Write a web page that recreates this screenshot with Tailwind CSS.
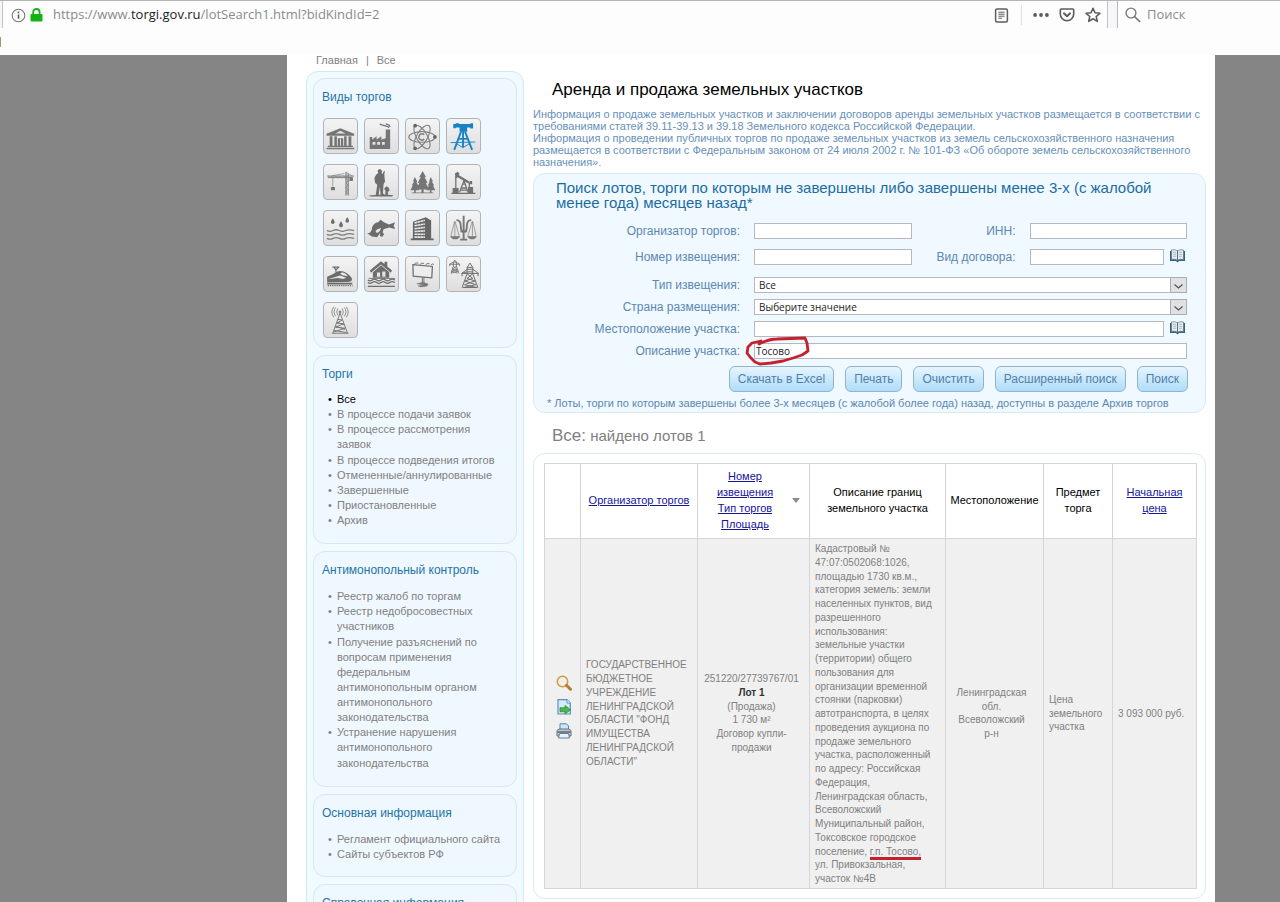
<!DOCTYPE html>
<html lang="ru">
<head>
<meta charset="utf-8">
<title>Аренда и продажа земельных участков</title>
<script src="https://cdn.jsdelivr.net/npm/@tailwindcss/browser@4"></script>
</head>
<body class="h-screen overflow-hidden bg-white font-['Liberation_Sans',Arial,sans-serif] text-[#808080] flex flex-col">

<!-- Browser toolbar -->
<header class="h-[55px] shrink-0 bg-[#fdfdfd] font-['Open_Sans','Noto_Sans',sans-serif] text-[13px]">
  <div class="flex h-7 items-stretch border-t border-[#b5b5b8] bg-[#f6f6f9] pl-[2px]">
    <div class="flex flex-1 items-center border-x border-[#c4c4c8] bg-[#fdfdfd] pl-2 pr-[6px] pt-px">
      <svg class="size-[15px]" viewBox="0 0 15 15" fill="none" stroke="#777" aria-hidden="true"><circle cx="7.5" cy="7.5" r="6.3" stroke-width="1.1"/><path d="M7.5 6.6v4.2M7.5 3.6v1.6" stroke="#555" stroke-width="1.5"/></svg>
      <svg class="ml-[4px] h-[14px] w-[13px]" viewBox="0 0 13 14" aria-hidden="true"><path d="M3.2 7V4.2a3.2 3.2 0 0 1 6.4 0V7" fill="none" stroke="#12b312" stroke-width="1.8"/><rect x=".5" y="6" width="12" height="7.6" rx="1" fill="#12b312"/></svg>
      <span class="ml-[10px] flex-1 text-[#8b8b8b]">https://www.<span class="text-[#1c1c1c]">torgi.gov.ru</span>/lotSearch1.html?bidKindId=2</span>
      <button aria-label="Режим чтения" class="size-[15px]"><svg viewBox="0 0 15 15" fill="none" stroke="#5e5e5e" aria-hidden="true"><rect x="1.6" y=".9" width="11.8" height="13.2" rx="1.5" stroke-width="1.5"/><path d="M4.4 4.2h6.2M4.4 6.2h6.2M4.4 8.2h6.2M4.4 10.2h3.6" stroke-width="1"/></svg></button>
      <span class="ml-3 mr-[11px] h-5 w-px bg-[#e0e0e3]"></span>
      <button aria-label="Действия" class="h-4 w-4"><svg viewBox="0 0 16 16" fill="#5c5c5c" aria-hidden="true"><circle cx="2.1" cy="8" r="1.9"/><circle cx="8" cy="8" r="1.9"/><circle cx="13.9" cy="8" r="1.9"/></svg></button>
      <button aria-label="Сохранить в Pocket" class="ml-[10px] size-4"><svg viewBox="0 0 16 16" fill="none" stroke="#5c5c5c" stroke-width="1.6" stroke-linecap="round" stroke-linejoin="round" aria-hidden="true"><path d="M2.3 2h11.4c.6 0 1 .4 1 1v4a6.7 6.7 0 0 1-13.4 0V3c0-.6.4-1 1-1z"/><path d="M4.9 6.3 8 9.2l3.1-2.9" stroke-width="1.9"/></svg></button>
      <button aria-label="Добавить в закладки" class="ml-[10px] size-4"><svg viewBox="0 0 16 16" fill="none" stroke="#5c5c5c" stroke-width="1.6" stroke-linejoin="round" aria-hidden="true"><path d="m8 1.3 2 4.5 4.9.5-3.7 3.2 1.1 4.9L8 11.8l-4.3 2.6 1.1-4.9L1.1 6.3 6 5.800z"/></svg></button>
    </div>
    <label class="ml-[9px] flex w-[163px] items-center border-l border-[#b9b9bd] bg-[#fdfdfd] pl-[7px] pt-px">
      <svg class="size-4 shrink-0" viewBox="0 0 16 16" fill="none" stroke="#7a7a7a" aria-hidden="true"><circle cx="6" cy="6" r="4.900" stroke-width="1.4"/><path d="m9.600 9.600 5.600 5.400" stroke-width="1.7"/></svg>
      <input type="search" placeholder="Поиск" aria-label="Поиск" class="ml-[6px] w-full min-w-0 bg-transparent outline-none placeholder:text-[#8c8c8c]">
    </label>
  </div>
  <div class="mt-[9px] h-[10px] w-px bg-[#9aa06a]"></div>
</header>

<div class="grid min-h-0 flex-1 grid-cols-[287px_minmax(0,1fr)_65px] bg-[#858585]">
<div></div>
<div class="overflow-hidden bg-white pl-[19px] pr-[9px]">
<div class="flex gap-[9px]">

  <!-- Sidebar -->
  <aside class="w-[218px] shrink-0">
    <nav class="h-4 pl-[10px] text-[11px] leading-[11px]" aria-label="Путь"><a href="#">Главная</a><span class="mx-2">|</span><a href="#">Все</a></nav>
    <div class="flex flex-col gap-[7px] rounded-xl border border-[#cfe9f5] bg-[#f0faff] px-[6px] py-[6px]">

      <section class="rounded-xl border border-[#d6e6f4] bg-[#f0f8ff] px-2 pb-[9px] pt-[10px]">
        <h2 class="text-[12px] leading-4 text-[#1e74a8]">Виды торгов</h2>
        <div class="mt-[13px] grid grid-cols-[repeat(4,35px)] gap-x-[6px] gap-y-[10px] pl-px [&>button]:h-9">
          <button aria-label="Государственное имущество" class="rounded-[4px] border border-[#b3b3b3] bg-linear-to-b from-[#f4f4f4] to-[#dedede]"><svg viewBox="0 0 105 105" fill="#757575" aria-hidden="true"><path d="M8 44 52 26l44 18v6H8zM18 52h9v30h-9zM33 52h8v30h-8zM64 52h8v30h-8zM78 52h9v30h-9zM44 58h17v24H44zM12 82h80v4H12zM8 88h88v5H8z"/><path d="m36 43 16-9 17 9zM51 60h3v22h-3z" fill="#e4e4e4"/></svg></button>
          <button aria-label="Предприятия" class="rounded-[4px] border border-[#b3b3b3] bg-linear-to-b from-[#f4f4f4] to-[#dedede]"><svg viewBox="0 0 105 105" fill="#757575" aria-hidden="true"><path d="M15 92V54h8v8l14-10v10l15-10v10l14-4V30h14v62z"/><path d="M24 70h9v9h-9zM39 70h9v9h-9zM54 70h9v9h-9z" fill="#e4e4e4"/><path d="M76 25c-2-8-9-4-14-7s-9 0-15-5M80 22c-2-9-9-7-14-10" fill="none" stroke="#757575" stroke-width="4"/></svg></button>
          <button aria-label="Атомная отрасль" class="rounded-[4px] border border-[#b3b3b3] bg-linear-to-b from-[#f4f4f4] to-[#dedede]"><svg viewBox="0 0 105 105" fill="none" stroke="#808080" stroke-width="3.500" aria-hidden="true"><ellipse cx="51" cy="54" rx="42" ry="17"/><ellipse cx="51" cy="54" rx="42" ry="17" transform="rotate(60 51 54)"/><ellipse cx="51" cy="54" rx="42" ry="17" transform="rotate(120 51 54)"/><circle cx="51" cy="54" r="14" fill="#e8e8e8" stroke="none"/><path d="M58 47a10 10 0 1 0 0 14" stroke-width="5"/><g fill="#666" stroke="none"><circle cx="29" cy="18" r="6"/><circle cx="92" cy="54" r="6"/><circle cx="29" cy="90" r="6"/></g></svg></button>
          <button aria-label="Земельные участки" class="rounded-[4px] border border-[#b3b3b3] bg-linear-to-b from-[#f4f4f4] to-[#dedede]"><svg viewBox="0 0 105 105" fill="#1783c6" aria-hidden="true"><path d="M20 13h8v-3h10v3h36v-3h9v17h-9v-3H28v2h-8zM40 24h24v13H40z"/><path d="M45 36 23 95M57 36l23 59M51 36v50M37 60h29" fill="none" stroke="#1783c6" stroke-width="6"/><path d="M12 72l78-2M31 76l20 12 22-14" fill="none" stroke="#1783c6" stroke-width="3"/></svg></button>

          <button aria-label="Строительство" class="rounded-[4px] border border-[#b3b3b3] bg-linear-to-b from-[#f4f4f4] to-[#dedede]"><svg viewBox="0 0 105 105" fill="none" stroke="#777" aria-hidden="true"><path d="M10 32h86M12 37h78" stroke-width="3"/><path d="m14 32 6 5 6-5 6 5 6-5 6 5 6-5 6 5 6-5 6 5 6-5" stroke-width="2"/><path d="M65 24 25 31M70 20l20 12" stroke-width="2"/><path d="M70 18v76M77 24v70" stroke-width="3.500"/><path d="m70 40 7 7-7 7 7 7-7 7 7 7-7 7 7 7" stroke-width="2.500"/><path d="M28 37v28" stroke-width="2"/><path d="M22 67h13v10H22zM81 36h11v12H81z" fill="#777" stroke="none"/></svg></button>
          <button aria-label="Охота" class="rounded-[4px] border border-[#b3b3b3] bg-linear-to-b from-[#f4f4f4] to-[#dedede]"><svg viewBox="0 0 105 105" fill="#6e6e6e" aria-hidden="true"><path d="M40 14c4-6 13-5 14 2l-1 7 8 6 3 20-5 8-2 30 6 7H50l-3-28-4 28h-9l5-34-7-7-2-16 6-10 6-5zM12 94l20-2 30-1 28 2-4 4H18z"/><path d="m57 23 5-7-8 58M66 92V78l-4-5 5-7 8 3 2 9-5 5v9z" stroke="#6e6e6e" stroke-width="2"/></svg></button>
          <button aria-label="Леса" class="rounded-[4px] border border-[#b3b3b3] bg-linear-to-b from-[#f4f4f4] to-[#dedede]"><svg viewBox="0 0 105 105" fill="#757575" aria-hidden="true"><path d="m53 16 11 20-5-1 10 19-6-1 10 22H56v11h-7V75H33l10-22-6 1 10-19-5 1zM28 35l8 15-3 1 8 15-4 2 5 9H31v8h-5v-8H14l8-16-4 1 8-13h-4zM79 35l7 14h-4l8 13-4-1 7 16H81v8h-5v-8H65l8-16-4 1 7-13h-3zM18 84h69v3H18z"/></svg></button>
          <button aria-label="Недропользование" class="rounded-[4px] border border-[#b3b3b3] bg-linear-to-b from-[#f4f4f4] to-[#dedede]"><svg viewBox="0 0 105 105" fill="#707070" aria-hidden="true"><path d="m25 24 9-6 6 6-3 5 34 20-3 7-34-20-6 4z"/><path d="M28 33v38M54 46 40 84M54 46l13 38M45 70h17M43 77h21M71 52v20M50 58h8" fill="none" stroke="#707070" stroke-width="4"/><path d="M18 70h19v15H18zM67 67h16v18H67zM14 85h76v4H14zM72 48h8v10h-8z"/></svg></button>

          <button aria-label="Водные объекты" class="rounded-[4px] border border-[#b3b3b3] bg-linear-to-b from-[#f4f4f4] to-[#dedede]"><svg viewBox="0 0 105 105" fill="#707070" aria-hidden="true"><path d="M28 20q12 17 0 18-12-1 0-18zM74 16q12 17 0 18-12-1 0-18zM54 29q13 19 0 20-12-1 0-20z"/><path d="M9 59q10 5 20 0t20 0 20 0 27 0M9 71q10 5 20 0t20 0 20 0 27 0M9 84q10 5 20 0t20 0 20 0 27 0" fill="none" stroke="#808080" stroke-width="4"/></svg></button>
          <button aria-label="Рыболовство" class="rounded-[4px] border border-[#b3b3b3] bg-linear-to-b from-[#f4f4f4] to-[#dedede]"><svg viewBox="0 0 105 105" fill="#6b6b6b" aria-hidden="true"><path d="M22 56c0-12 8-21 20-23l8-8 10 8 16 7 20-7-5 11 5 10-19-5-18 6-3 10 5 6-6 8-8-3 2-10-11 14-16-2-8-6-7-4 9-2z"/><path d="M34 60q8-10 17-8-2 8-9 13-9 4-8-5z" fill="#e7e7e7"/></svg></button>
          <button aria-label="Здания" class="rounded-[4px] border border-[#b3b3b3] bg-linear-to-b from-[#f4f4f4] to-[#dedede]"><svg viewBox="0 0 105 105" fill="#666" aria-hidden="true"><path d="M22 31 63 17l17 10v57h8v6H15v-6h7z"/><path d="m27 35 33-9M27 44l33-6M27 53l33-4M27 62l33-2M27 71h33M27 80h33" stroke="#ececec" stroke-width="5"/><path d="M36 29v55M46 27v57M55 24v60" stroke="#777" stroke-width="1.500"/></svg></button>
          <button aria-label="Конфискат" class="rounded-[4px] border border-[#b3b3b3] bg-linear-to-b from-[#f4f4f4] to-[#dedede]"><svg viewBox="0 0 105 105" fill="none" stroke="#777" aria-hidden="true"><path d="M53 12v76M30 26q14 0 14 20 0 17 9 18 10-1 10-18 0-20 14-20" stroke-width="6"/><path d="M42 88h22M43 62h21" stroke-width="5"/><path d="M24 30 12 78h27L26 30M80 30 66 78h27L82 30M25 30v46M81 30v46" stroke-width="2"/><path d="M11 78h30q-3 9-15 9t-15-9zM65 78h29q-3 9-14 9t-15-9z" fill="#777" stroke="none"/></svg></button>

          <button aria-label="Железные дороги" class="rounded-[4px] border border-[#b3b3b3] bg-linear-to-b from-[#f4f4f4] to-[#dedede]"><svg viewBox="0 0 105 105" fill="#6b6b6b" aria-hidden="true"><path d="M10 60q20-7 30-16 15-7 32 4 18 13 17 21-2 8-18 7l-61 1zM10 79h80v5H10z"/><path d="M27 29h22M32 30l6 8 8-8M38 38v7" fill="none" stroke="#6b6b6b" stroke-width="3.500"/><path d="M56 46q14 1 20 12l-18-3-6-6zM11 68l40-12 20 7-10 4-17-3z" fill="#e5e5e5"/><path d="M12 88h79" stroke="#6b6b6b" stroke-width="4" stroke-dasharray="4 3"/></svg></button>
          <button aria-label="Жилая недвижимость" class="rounded-[4px] border border-[#b3b3b3] bg-linear-to-b from-[#f4f4f4] to-[#dedede]"><svg viewBox="0 0 105 105" fill="#6e6e6e" aria-hidden="true"><path d="m15 40 36-30 11 9v-7h9v15l15 13-4 7-31-26-32 26zM25 45l26-22 26 22v18H25z"/><path d="M38 46h10v14H38zM55 43h10v17H55z" fill="#e5e5e5"/><path d="M9 70q7 5 14 0t14 0 14 0 14 0 14 0 16 0M9 78q7 5 14 0t14 0 14 0 14 0 14 0 16 0M9 90h86" fill="none" stroke="#6e6e6e" stroke-width="4"/><path d="M12 65h84" stroke="#777" stroke-width="3"/></svg></button>
          <button aria-label="Реклама" class="rounded-[4px] border border-[#b3b3b3] bg-linear-to-b from-[#f4f4f4] to-[#dedede]"><svg viewBox="0 0 105 105" fill="none" stroke="#6e6e6e" aria-hidden="true"><path d="m22 21 62 6-2 36-59-5z" stroke-width="4" fill="#ededed"/><path d="M26 20q4-6 13-4M44 21q4-6 13-4M62 22q4-6 13-4M79 23q4-6 10-3" stroke-width="3"/><path d="M52 62v22M57 62v22" stroke-width="3"/><path d="m34 82 20-5 17 6-5 7-19 2-9-3 20-4-13-1z" fill="#777" stroke-width="1"/></svg></button>
          <button aria-label="Электросети" class="rounded-[4px] border border-[#b3b3b3] bg-linear-to-b from-[#f4f4f4] to-[#dedede]"><svg viewBox="0 0 105 105" fill="none" stroke="#696969" aria-hidden="true"><path d="M73 16 64 30v20L48 94M73 16l9 14v20l16 44M64 30h18M47 49l17-13h19l17 13H47l17-5h18M64 50l18 15-25 8 34 12-38 9M82 50 64 65l25 8-33 12 38 9M50 94h47M48 49v9M99 49v9" stroke-width="3"/><path d="m25 7-5 8v11L13 49M25 7l5 8v11l8 23M8 20l12-7h10l10 7H8M20 26l12 10-17 6 19 6M30 26 18 36l17 6-21 6M9 20v6M40 20v6" stroke-width="2.500"/></svg></button>

          <button aria-label="Связь" class="rounded-[4px] border border-[#b3b3b3] bg-linear-to-b from-[#f4f4f4] to-[#dedede]"><svg viewBox="0 0 105 105" fill="none" stroke="#777" stroke-width="3" aria-hidden="true"><path d="M51 29 28 93M51 29l24 64M25 93h53M44 49l14 2-18 10 22 2-26 11 31 3-35 12M42 58l22 8M37 70l30 11M32 84l40 7"/><circle cx="51" cy="25" r="3" fill="#777"/><path d="M44 14q-7 11 0 22M37 11q-10 14 0 28M31 9q-12 17 0 33M58 14q7 11 0 22M65 11q10 14 0 28M71 9q12 17 0 33" stroke-width="2.500"/></svg></button>
        </div>
      </section>

      <section class="rounded-xl border border-[#d6e6f4] bg-[#f0f8ff] px-2 pb-[15px] pt-[10px]">
        <h2 class="text-[12px] leading-4 text-[#1e74a8]">Торги</h2>
        <ul class="mt-[10px] pl-[15px] text-[11px] leading-snug [&>li]:before:float-left [&>li]:before:-ml-[9px] [&>li]:before:content-['•']">
          <li class="text-black"><a href="#">Все</a></li>
          <li><a href="#">В процессе подачи заявок</a></li>
          <li><a href="#">В процессе рассмотрения<br>заявок</a></li>
          <li><a href="#">В процессе подведения итогов</a></li>
          <li><a href="#">Отмененные/аннулированные</a></li>
          <li><a href="#">Завершенные</a></li>
          <li><a href="#">Приостановленные</a></li>
          <li><a href="#">Архив</a></li>
        </ul>
      </section>

      <section class="rounded-xl border border-[#d6e6f4] bg-[#f0f8ff] px-2 pb-[15px] pt-[10px]">
        <h2 class="text-[12px] leading-4 text-[#1e74a8]">Антимонопольный контроль</h2>
        <ul class="mt-[11px] pl-[15px] text-[11px] leading-snug [&>li]:before:float-left [&>li]:before:-ml-[9px] [&>li]:before:content-['•']">
          <li><a href="#">Реестр жалоб по торгам</a></li>
          <li><a href="#">Реестр недобросовестных<br>участников</a></li>
          <li><a href="#">Получение разъяснений по<br>вопросам применения<br>федеральным<br>антимонопольным органом<br>антимонопольного<br>законодательства</a></li>
          <li><a href="#">Устранение нарушения<br>антимонопольного<br>законодательства</a></li>
        </ul>
      </section>

      <section class="rounded-xl border border-[#d6e6f4] bg-[#f0f8ff] px-2 pb-[14px] pt-[10px]">
        <h2 class="text-[12px] leading-4 text-[#1e74a8]">Основная информация</h2>
        <ul class="mt-[11px] pl-[15px] text-[11px] leading-snug [&>li]:before:float-left [&>li]:before:-ml-[9px] [&>li]:before:content-['•']">
          <li><a href="#">Регламент официального сайта</a></li>
          <li><a href="#">Сайты субъектов РФ</a></li>
        </ul>
      </section>

      <section class="rounded-xl border border-[#d6e6f4] bg-[#f0f8ff] px-2 pb-[14px] pt-[10px]">
        <h2 class="text-[12px] leading-4 text-[#1e74a8]">Справочная информация</h2>
      </section>
    </div>
  </aside>

  <!-- Content -->
  <main class="min-w-0 flex-1">
    <h1 class="pl-[19px] pt-[25px] text-[17px] leading-5 text-black">Аренда и продажа земельных участков</h1>
    <div class="mt-2 text-[11px] leading-3 text-[#6690ba]">
      <p>Информация о продаже земельных участков и заключении договоров аренды земельных участков размещается в соответствии с<br>требованиями статей 39.11-39.13 и 39.18 Земельного кодекса Российской Федерации.</p>
      <p>Информация о проведении публичных торгов по продаже земельных участков из земель сельскохозяйственного назначения<br>размещается в соответствии с Федеральным законом от 24 июля 2002 г. № 101-ФЗ «Об обороте земель сельскохозяйственного<br>назначения».</p>
    </div>

    <form class="mt-[5px] rounded-xl border border-[#d5ebf4] bg-[#f0f9ff] pb-px pt-[6px] text-[12px] text-[#5b87b3]" onsubmit="return false">
      <h2 class="px-[22px] text-[15px] leading-[15px] text-[#1c6ca3]">Поиск лотов, торги по которым не завершены либо завершены менее 3-х (с жалобой<br>менее года) месяцев назад*</h2>

      <div class="mt-[13px] grid grid-cols-[206px_minmax(0,1fr)_90px_minmax(0,1fr)] items-center gap-x-[14px] gap-y-[10px] pr-[18px] text-right leading-4">
        <label for="org">Организатор торгов:</label>
        <input id="org" class="h-4 border border-[#b4b9be] bg-white px-px">
        <label for="inn">ИНН:</label>
        <input id="inn" class="h-4 border border-[#b4b9be] bg-white px-px">
        <label for="num">Номер извещения:</label>
        <input id="num" class="h-4 border border-[#b4b9be] bg-white px-px">
        <label for="kind">Вид договора:</label>
        <div class="flex gap-[6px]">
          <input id="kind" class="h-4 min-w-0 flex-1 border border-[#b4b9be] bg-white px-px">
          <button type="button" aria-label="Выбрать вид договора" class="mr-[2px] h-[14px] w-[15px]"><svg viewBox="0 0 15 14" aria-hidden="true"><path d="M0 2h15v10H9l-1.500 1.500L6 12H0z" fill="#2f6389"/><path d="M1.500 1q3-1 6 .7Q10.500 0 13.500 1v9.400q-3-.8-6 .8-3-1.600-6-.8z" fill="#e9ecee" stroke="#54738a" stroke-width=".7"/><path d="M7.500 1.700v9.500" stroke="#5a6a75"/><path d="M3 3.300h3M3 5.300h3M3 7.300h3M9 3.300h3M9 5.300h3M9 7.300h3" stroke="#a8adb1" stroke-width=".8"/></svg></button>
        </div>
      </div>

      <div class="mt-3 grid grid-cols-[206px_minmax(0,1fr)] items-center gap-x-[14px] gap-y-[6px] pr-[18px] text-right leading-4">
        <label for="type">Тип извещения:</label>
        <div class="relative h-4">
          <select id="type" class="block h-4 w-full appearance-none border border-[#b4b9be] bg-white pl-1 font-['Open_Sans',sans-serif] text-[10px] leading-[14px] text-[#222]"><option>Все</option></select>
          <svg class="pointer-events-none absolute right-0 top-0 h-4 w-[17px]" viewBox="0 0 17 16" aria-hidden="true"><path d="M.5.5h16v15H.5z" fill="#e1e1e4" stroke="#a8abb0"/><path d="m4.500 7.500 4 3.500 4-3.500" fill="none" stroke="#555" stroke-width="1.300"/></svg>
        </div>
        <label for="country">Страна размещения:</label>
        <div class="relative h-4">
          <select id="country" class="block h-4 w-full appearance-none border border-[#b4b9be] bg-white pl-1 font-['Open_Sans',sans-serif] text-[10px] leading-[14px] text-[#222]"><option>Выберите значение</option></select>
          <svg class="pointer-events-none absolute right-0 top-0 h-4 w-[17px]" viewBox="0 0 17 16" aria-hidden="true"><path d="M.5.5h16v15H.5z" fill="#e1e1e4" stroke="#a8abb0"/><path d="m4.500 7.500 4 3.500 4-3.500" fill="none" stroke="#555" stroke-width="1.300"/></svg>
        </div>
        <label for="place">Местоположение участка:</label>
        <div class="flex gap-[6px]">
          <input id="place" class="h-4 min-w-0 flex-1 border border-[#b4b9be] bg-white px-px">
          <button type="button" aria-label="Выбрать местоположение" class="mr-[2px] h-[14px] w-[15px]"><svg viewBox="0 0 15 14" aria-hidden="true"><path d="M0 2h15v10H9l-1.500 1.500L6 12H0z" fill="#2f6389"/><path d="M1.500 1q3-1 6 .7Q10.500 0 13.500 1v9.400q-3-.8-6 .8-3-1.600-6-.8z" fill="#e9ecee" stroke="#54738a" stroke-width=".7"/><path d="M7.500 1.700v9.500" stroke="#5a6a75"/><path d="M3 3.300h3M3 5.300h3M3 7.300h3M9 3.300h3M9 5.300h3M9 7.300h3" stroke="#a8adb1" stroke-width=".8"/></svg></button>
        </div>
        <label for="desc">Описание участка:</label>
        <div class="relative">
          <input id="desc" value="Тосово" class="block h-4 w-full border border-[#b4b9be] bg-white px-px font-['Open_Sans',sans-serif] text-[10px] leading-[14px] text-[#222]">
          <svg class="pointer-events-none absolute -left-[10px] -top-[7px] h-[31px] w-[68px]" viewBox="0 0 68 31" fill="none" stroke="#c5202e" stroke-width="2.800" stroke-linecap="round" stroke-linejoin="round" aria-hidden="true"><path d="M15 8C21 5 27 3 33 3l28-1 2 5 1 8-6 4-9 3-10 3-12 2-11 1-5-2-5-5-3-4 1-6 4-4 9-2"/></svg>
        </div>
      </div>

      <div class="mt-[7px] flex justify-end gap-[11px] pr-[17px] text-[12px] leading-6 text-[#4f80ad]">
        <button type="button" class="rounded-[6px] border border-[#8fb4cc] bg-linear-to-b from-[#e6f5fe] to-[#b0dcf8] px-2">Скачать в Excel</button>
        <button type="button" class="rounded-[6px] border border-[#8fb4cc] bg-linear-to-b from-[#e6f5fe] to-[#b0dcf8] px-2">Печать</button>
        <button type="reset" class="rounded-[6px] border border-[#8fb4cc] bg-linear-to-b from-[#e6f5fe] to-[#b0dcf8] px-2">Очистить</button>
        <button type="button" class="rounded-[6px] border border-[#8fb4cc] bg-linear-to-b from-[#e6f5fe] to-[#b0dcf8] px-2">Расширенный поиск</button>
        <button type="submit" class="rounded-[6px] border border-[#8fb4cc] bg-linear-to-b from-[#e6f5fe] to-[#b0dcf8] px-2">Поиск</button>
      </div>
      <p class="mt-1 pl-[13px] text-[11px] leading-[15px]">* Лоты, торги по которым завершены более 3-х месяцев (с жалобой более года) назад, доступны в разделе Архив торгов</p>
    </form>

    <h2 class="mt-[13px] pl-[19px] text-[15px] leading-5"><span class="text-[17px]">Все:</span> найдено лотов 1</h2>

    <div class="mt-[7px] rounded-xl border border-[#d5ebf2] py-[9px] pl-[10px] pr-[9px]">
      <table class="w-full table-fixed border-collapse text-center text-[10px] leading-snug">
        <colgroup><col class="w-[36px]"><col class="w-[117px]"><col class="w-[112px]"><col class="w-[136px]"><col class="w-[98px]"><col class="w-[69px]"><col class="w-[84px]"></colgroup>
        <thead>
          <tr class="h-[75px] text-[11px] leading-4 text-black [&>th]:border [&>th]:border-[#d5d5d5] [&>th]:pb-[2px] [&>th]:font-normal">
            <th></th>
            <th><a href="#" class="text-[#14149c] underline">Организатор торгов</a></th>
            <th><div class="flex items-center pr-[9px]"><span class="flex-1"><a href="#" class="text-[#14149c] underline">Номер<br>извещения</a><br><a href="#" class="text-[#14149c] underline">Тип торгов</a><br><a href="#" class="text-[#14149c] underline">Площадь</a></span><svg class="h-[5px] w-2" viewBox="0 0 8 5" aria-hidden="true"><path d="M0 0h8L4 5z" fill="#8a8a8a"/></svg></div></th>
            <th>Описание границ<br>земельного участка</th>
            <th>Местоположение</th>
            <th>Предмет<br>торга</th>
            <th><a href="#" class="text-[#14149c] underline">Начальная<br>цена</a></th>
          </tr>
        </thead>
        <tbody>
          <tr class="bg-[#f0f0f0] [&>td]:border [&>td]:border-[#d5d5d5]">
            <td>
              <div class="flex flex-col items-center gap-2 pb-3 pl-[2px]">
                <a href="#" aria-label="Просмотр"><svg class="size-4" viewBox="0 0 16 16" aria-hidden="true"><circle cx="6.500" cy="6.500" r="5.200" fill="#f4f0e8" stroke="#cf9a48" stroke-width="1.500"/><path d="m10.500 10.300 4 4" stroke="#b47e31" stroke-width="3" stroke-linecap="round"/></svg></a>
                <a href="#" aria-label="Экспорт"><svg class="size-4" viewBox="0 0 16 16" aria-hidden="true"><path d="M2 .7h9l3.300 3.300v11H2z" fill="#d5eafa" stroke="#5a8fc0" stroke-width="1.200"/><path d="M11 .7V4h3.300" fill="#fff" stroke="#5a8fc0"/><path d="M4 8.800h5V6.500l5.500 4.300L9 15v-2.300H4z" fill="#4cb64f" stroke="#2c8c3a" stroke-width=".8"/></svg></a>
                <a href="#" aria-label="Печать"><svg class="size-4" viewBox="0 0 16 16" aria-hidden="true"><path d="M4 6V.8h6.500L12.500 3v3" fill="#cfe6fa" stroke="#5285b7"/><path d="M1 7.500 3 6h10l2 1.500V13H1z" fill="#bfc6cd" stroke="#68737e"/><path d="M1.500 9h13" stroke="#5b6671" stroke-width="1.500"/><path d="M3.500 10.500h9l1 4.500h-11z" fill="#e7f2fb" stroke="#5e7f9e"/></svg></a>
              </div>
            </td>
            <td class="pl-[5px] text-left">ГОСУДАРСТВЕННОЕ<br>БЮДЖЕТНОЕ<br>УЧРЕЖДЕНИЕ<br>ЛЕНИНГРАДСКОЙ<br>ОБЛАСТИ "ФОНД<br>ИМУЩЕСТВА<br>ЛЕНИНГРАДСКОЙ<br>ОБЛАСТИ"</td>
            <td class="pl-1 pr-2">251220/27739767/01<br><b class="text-[#333]">Лот 1</b><br>(Продажа)<br>1 730 м²<br>Договор купли-<br>продажи</td>
            <td class="pb-[2px] pl-[5px] pt-[3px] text-left">Кадастровый №<br>47:07:0502068:1026,<br>площадью 1730 кв.м.,<br>категория земель: земли<br>населенных пунктов, вид<br>разрешенного<br>использования:<br>земельные участки<br>(территории) общего<br>пользования для<br>организации временной<br>стоянки (парковки)<br>автотранспорта, в целях<br>проведения аукциона по<br>продаже земельного<br>участка, расположенный<br>по адресу: Российская<br>Федерация,<br>Ленинградская область,<br>Всеволожский<br>Муниципальный район,<br>Токсовское городское<br>поселение, <span class="border-b-3 border-[#c5202e]">г.п. Тосово,</span><br>ул. Привокзальная,<br>участок №4В</td>
            <td class="pr-[6px]">Ленинградская<br>обл.<br>Всеволожский<br>р-н</td>
            <td class="pl-[5px] text-left">Цена<br>земельного<br>участка</td>
            <td class="pl-[5px] text-left">3 093 000 руб.</td>
          </tr>
        </tbody>
      </table>
    </div>
  </main>
</div>
</div>
<div></div>
</div>
</body>
</html>
